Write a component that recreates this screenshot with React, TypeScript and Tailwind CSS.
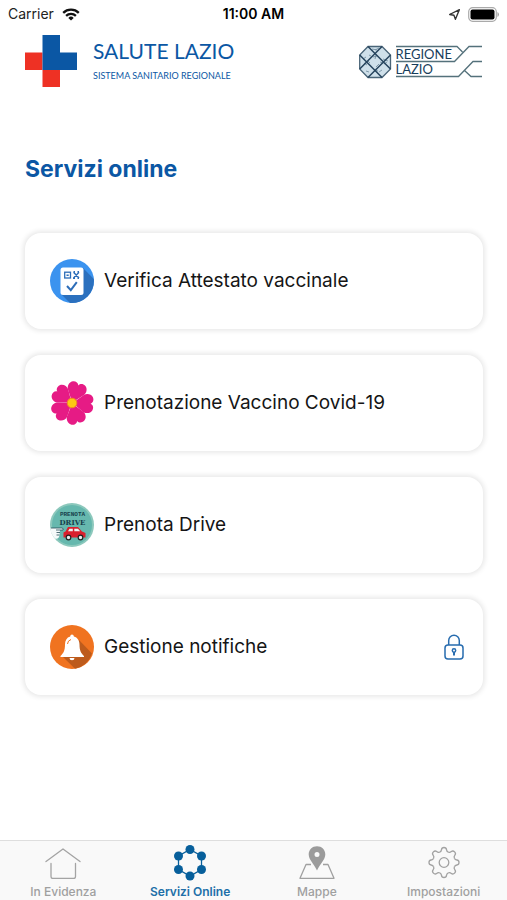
import React from 'react';

const BLUE = '#0b57a4';

const WifiIcon = () => (
  <svg width="18" height="13" viewBox="0 0 18 13" fill="none" stroke="#111" strokeWidth="2.3">
    <path d="M1.2 4.8a11.2 11.2 0 0 1 15.6 0" />
    <path d="M4.1 7.9a7.1 7.1 0 0 1 9.8 0" />
    <path d="M9 12.6 6.3 9.9a3.9 3.9 0 0 1 5.4 0z" fill="#111" stroke="none" />
  </svg>
);

const StatusBar: React.FC = () => (
  <div className="grid h-7 grid-cols-3 items-center px-2 text-sm text-[#222]">
    <div className="flex items-center gap-2">
      <span>Carrier</span>
      <WifiIcon />
    </div>
    <span className="text-center font-semibold text-black">11:00 AM</span>
    <div className="flex items-center justify-end gap-2">
      <svg width="11" height="11" viewBox="0 0 12 12" fill="none" stroke="#333" strokeWidth="1.5" strokeLinejoin="round">
        <path d="M11.300.700 7 11.300 5.400 6.800.700 6z" />
      </svg>
      <svg width="31" height="15" viewBox="0 0 31 15">
        <rect x=".7" y=".7" width="27.6" height="13.6" rx="4" fill="#fff" stroke="#aaa" strokeWidth="1.2" />
        <rect x="2.5" y="2.5" width="24" height="10" rx="2" fill="#000" />
        <path d="M29.5 5v5q1.4-.8 1.4-2.5T29.5 5z" fill="#999" />
      </svg>
    </div>
  </div>
);

const SaluteLogo = () => (
  <svg width="52" height="52" viewBox="0 0 52 52">
    <path d="M0 17.500h17.500V35H35v17H17.500V35H0z" fill="#ee3124" />
    <path d="M17.500 0H35v17.500h17V35H17.500z" fill={BLUE} />
  </svg>
);

const RegioneLogo = () => (
  <svg width="124" height="34" viewBox="0 0 124 34" role="img" aria-label="Regione Lazio">
    <path d="M9 1.500h14l8.500 8.500v14L23 32.500H9L.7 24V10z" fill="#cfe0ea" stroke="#4a6578" strokeWidth="1.300" />
    <path d="M16 5l4-2M13 4l5 1M4 14l3-2M5 18l3 2M24 14l5 2M25 19l3-2M14 12l4-1M16 14l1-4M9 16l2 2M21 17l3 1M17 22l3-3M15 25l4 1M7 26l3 1M20 27l3-2M10 10l2 1" stroke="#6b8799" strokeWidth=".8" fill="none" />
    <path d="M9 1.500 31.500 24M.7 10 23 32.500M23 1.500.7 24M31.500 10 9 32.500" stroke="#27455e" strokeWidth="1.500" fill="none" />
    <g fill="none" stroke="#54717b" strokeWidth="1.300">
      <path d="M37 1.500h61l5.500 5.500M37 16.500h58.500L110 1.500h13" />
      <path d="M37 31.500h62.500L114 16.500h9M105.500 25.500l6.500 6h11" />
    </g>
    <g fill="#173d5b" fontFamily="Lato, sans-serif" fontSize="13">
      <text x="36.500" y="14">REGIONE</text>
      <text x="36.500" y="29">LAZIO</text>
    </g>
  </svg>
);

const AttestatoIcon = () => (
  <svg width="44" height="44" viewBox="0 0 44 44">
    <circle cx="22" cy="22" r="22" fill="#3b93ef" />
    <path d="M33 9l10.800 11A22 22 0 0 1 20 43.900L11 35z" fill="#2b70be" />
    <rect x="10.500" y="8.500" width="23" height="27.500" rx="2.500" fill="#fff" />
    <g fill="none" stroke="#2d6db8" strokeWidth="1.300">
      <rect x="14.700" y="13.200" width="5.800" height="5.800" />
      <path d="M16.500 16.200h2.200M23.500 13.300l5.500 5.700M29 13.300 23.500 19M23.500 12.800h1.500M27.500 12.800h1.500M23 19.200h2M27.500 19.200h1.500" strokeWidth="1.400" />
      <path d="m17 27 3.800 4.200 6-8" strokeWidth="2" />
    </g>
  </svg>
);

// Five heart petals around the centre
const petals = [20, 92, 164, 236, 308];

const FlowerIcon = () => (
  <svg width="44" height="44" viewBox="0 0 44 44">
    {petals.map((angle) => (
      <path
        key={angle}
        transform={`rotate(${angle} 22 22)`}
        d="M22 21.500 13.500 10.500C11.500 7.500 12.300 3 15.500 1.300 18 .1 21 .8 22 3.400 23 .8 26 .1 28.500 1.300 31.700 3 32.500 7.500 30.500 10.500z"
        fill="#e61b85"
      />
    ))}
    <circle cx="22" cy="22" r="4.800" fill="#fdc913" stroke="#f08a24" strokeWidth="1" />
  </svg>
);

const DriveIcon = () => (
  <svg width="44" height="44" viewBox="0 0 44 44">
    <circle cx="22" cy="22" r="22" fill="#8cc8bc" />
    <circle cx="22" cy="22" r="20" fill="#66b8ae" />
    <g fill="#173f4c" textAnchor="middle" fontWeight="bold">
      <text x="22.500" y="13" fontFamily="Liberation Mono, monospace" fontSize="6">PRENOTA</text>
      <text x="22.500" y="22" fontFamily="DejaVu Serif, serif" fontSize="7">DRIVE</text>
    </g>
    <path d="M.5 25h11.500q2 .5 1 2H10l-.5 5.500q-1 4-4.500 3Q0 30 .5 25z" fill="#f5fafa" />
    <path d="M1 25h11q2 .5 1 2H6M6.500 29.500H10M6.500 32h3" fill="none" stroke="#244c57" strokeWidth=".8" />
    <path d="M13.500 34.500v-5l2-1 2.500-4.500h10l4 4.500 3.500 1.500v4.500z" fill="#d9202d" />
    <path d="M18 28.300l1.500-2.600h3.300v2.600zM24.300 28.300v-2.600H28l2.200 2.600z" fill="#eff5f5" />
    <circle cx="18.500" cy="34.500" r="2.300" fill="#eee" stroke="#222" strokeWidth="1.200" />
    <circle cx="30.500" cy="34.500" r="2.300" fill="#eee" stroke="#222" strokeWidth="1.200" />
  </svg>
);

const BellIcon = () => (
  <svg width="44" height="44" viewBox="0 0 44 44">
    <circle cx="22" cy="22" r="22" fill="#f07320" />
    <path d="M29 15l13 13.500A22 22 0 0 1 25 43.800L12 31z" fill="#bd5b1c" />
    <path d="M22 9.500q1.700 0 1.900 2c3.600 1 5.600 4 5.600 8 0 6 1.500 8.500 4.500 11.500v1H10.500v-1c3-3 4.500-5.500 4.500-11.500 0-4 1.700-7 5.200-8q.1-2 1.800-2z" fill="#fff" />
    <path d="M19.500 33h5a2.500 2.200 0 0 1-5 0z" fill="#fff" />
    <path d="M17.500 19q.2-3.500 3.500-4.500" fill="none" stroke="#f07320" strokeWidth="1" />
  </svg>
);

const LockIcon = () => (
  <svg width="20" height="26" viewBox="0 0 20 26" fill="none" stroke="#276caf" strokeWidth="1.500">
    <rect x="1" y="11" width="18" height="14" rx="3" />
    <path d="M4.700 11V6.500a5.300 5.300 0 0 1 10.600 0V11" />
    <circle cx="10" cy="16.500" r="1.700" />
    <path d="M10 18v3.500" strokeWidth="2" />
  </svg>
);

const HomeIcon = () => (
  <svg width="36" height="34" viewBox="0 0 36 34" fill="none" stroke="#a4a4a4" strokeWidth="1.300" strokeLinecap="round" strokeLinejoin="round">
    <path d="M1 16.500 18 4l17 12.500M6 18.500v13q0 2 2 2h20.500q2 0 2-2v-13" />
  </svg>
);

const nodes = [[18, 4.5], [29.5, 11], [29.5, 24.5], [18, 31], [6.5, 24.5], [6.5, 11]];

const NetworkIcon = () => (
  <svg className="overflow-visible" width="36" height="34" viewBox="0 0 36 34" fill="#075f9b">
    <path d="M18 4.500 29.500 11v13.500L18 31 6.500 24.500V11z" fill="none" stroke="#075f9b" strokeWidth="1.300" />
    {nodes.map(([x, y]) => (
      <circle key={`${x}-${y}`} cx={x} cy={y} r="4.500" />
    ))}
  </svg>
);

const MapIcon = () => (
  <svg width="36" height="34" viewBox="0 0 36 34">
    <path d="M12 19.500H7L1 33.300h34l-6-13.800h-5" fill="none" stroke="#a0a0a0" strokeWidth="1.300" strokeLinejoin="round" />
    <path fillRule="evenodd" d="M18 1.300c4.700 0 8.300 3.500 8.300 8.200 0 5-5 9-8.300 16-3.300-7-8.300-11-8.300-16 0-4.700 3.600-8.200 8.300-8.200zm0 5.700a2.500 2.500 0 1 0 0 5 2.500 2.500 0 0 0 0-5z" fill="#9b9b9b" />
  </svg>
);

// One tooth with half a notch on each side, repeated every 45 degrees
const teeth = [0, 45, 90, 135, 180, 225, 270, 315];

const GearIcon = () => (
  <svg width="36" height="34" viewBox="0 0 36 34" fill="none" stroke="#a2a2a2" strokeWidth="1.300" strokeLinejoin="round">
    {teeth.map((angle) => (
      <path
        key={angle}
        transform={`rotate(${angle} 18 17.500)`}
        d="M13.700 7.100Q15.300 6.500 15.500 4.600 15.700 2.500 18 2.500T20.500 4.600Q20.700 6.500 22.300 7.100"
      />
    ))}
    <circle cx="18" cy="17.500" r="4.800" />
  </svg>
);

const services = [
  { label: 'Verifica Attestato vaccinale', Icon: AttestatoIcon },
  { label: 'Prenotazione Vaccino Covid-19', Icon: FlowerIcon },
  { label: 'Prenota Drive', Icon: DriveIcon },
  { label: 'Gestione notifiche', Icon: BellIcon, locked: true },
];

const tabs = [
  { label: 'In Evidenza', Icon: HomeIcon },
  { label: 'Servizi Online', Icon: NetworkIcon, active: true },
  { label: 'Mappe', Icon: MapIcon },
  { label: 'Impostazioni', Icon: GearIcon },
];

const App: React.FC = () => {
  return (
    <div className="flex min-h-screen flex-col bg-white font-['Inter',sans-serif]">
      <StatusBar />

      <header className="flex items-start justify-between pt-[7px] pr-6 pl-[25px]">
        <div className="flex gap-4">
          <SaluteLogo />
          <div className="flex flex-col gap-[5px] pt-1 font-['Lato',sans-serif] text-[#0b57a4]">
            <span className="text-[21px] leading-6">SALUTE LAZIO</span>
            <span className="text-[9px] leading-4">SISTEMA SANITARIO REGIONALE</span>
          </div>
        </div>
        <div className="pt-[10px]">
          <RegioneLogo />
        </div>
      </header>

      <main className="flex-1 pt-[66px] pr-6 pb-8 pl-[25px]">
        <h1 className="text-[23px] leading-8 font-bold text-[#0b57a4]">Servizi online</h1>
        <ul className="mt-12 flex flex-col gap-[26px]">
          {services.map(({ label, Icon, locked }) => (
            <li key={label}>
              <button className="flex h-24 w-full items-center gap-[10px] rounded-2xl bg-white pr-[19px] pl-[25px] text-left shadow-[0_0_5px_2px_rgba(0,0,0,0.09)]">
                <Icon />
                <span className="flex-1 text-[19px] text-[#151515]">{label}</span>
                {locked && <LockIcon />}
              </button>
            </li>
          ))}
        </ul>
      </main>

      <nav className="grid h-[60px] grid-cols-4 border-t border-[#dedede] bg-[#f9f9f9]">
        {tabs.map(({ label, Icon, active }) => (
          <a
            key={label}
            href="#"
            className={`flex flex-col items-center gap-[5px] pt-1 text-xs ${
              active ? 'font-semibold text-[#216fa8]' : 'font-medium text-[#a0a0a0]'
            }`}
          >
            <Icon />
            {label}
          </a>
        ))}
      </nav>
    </div>
  );
};

export default App;
